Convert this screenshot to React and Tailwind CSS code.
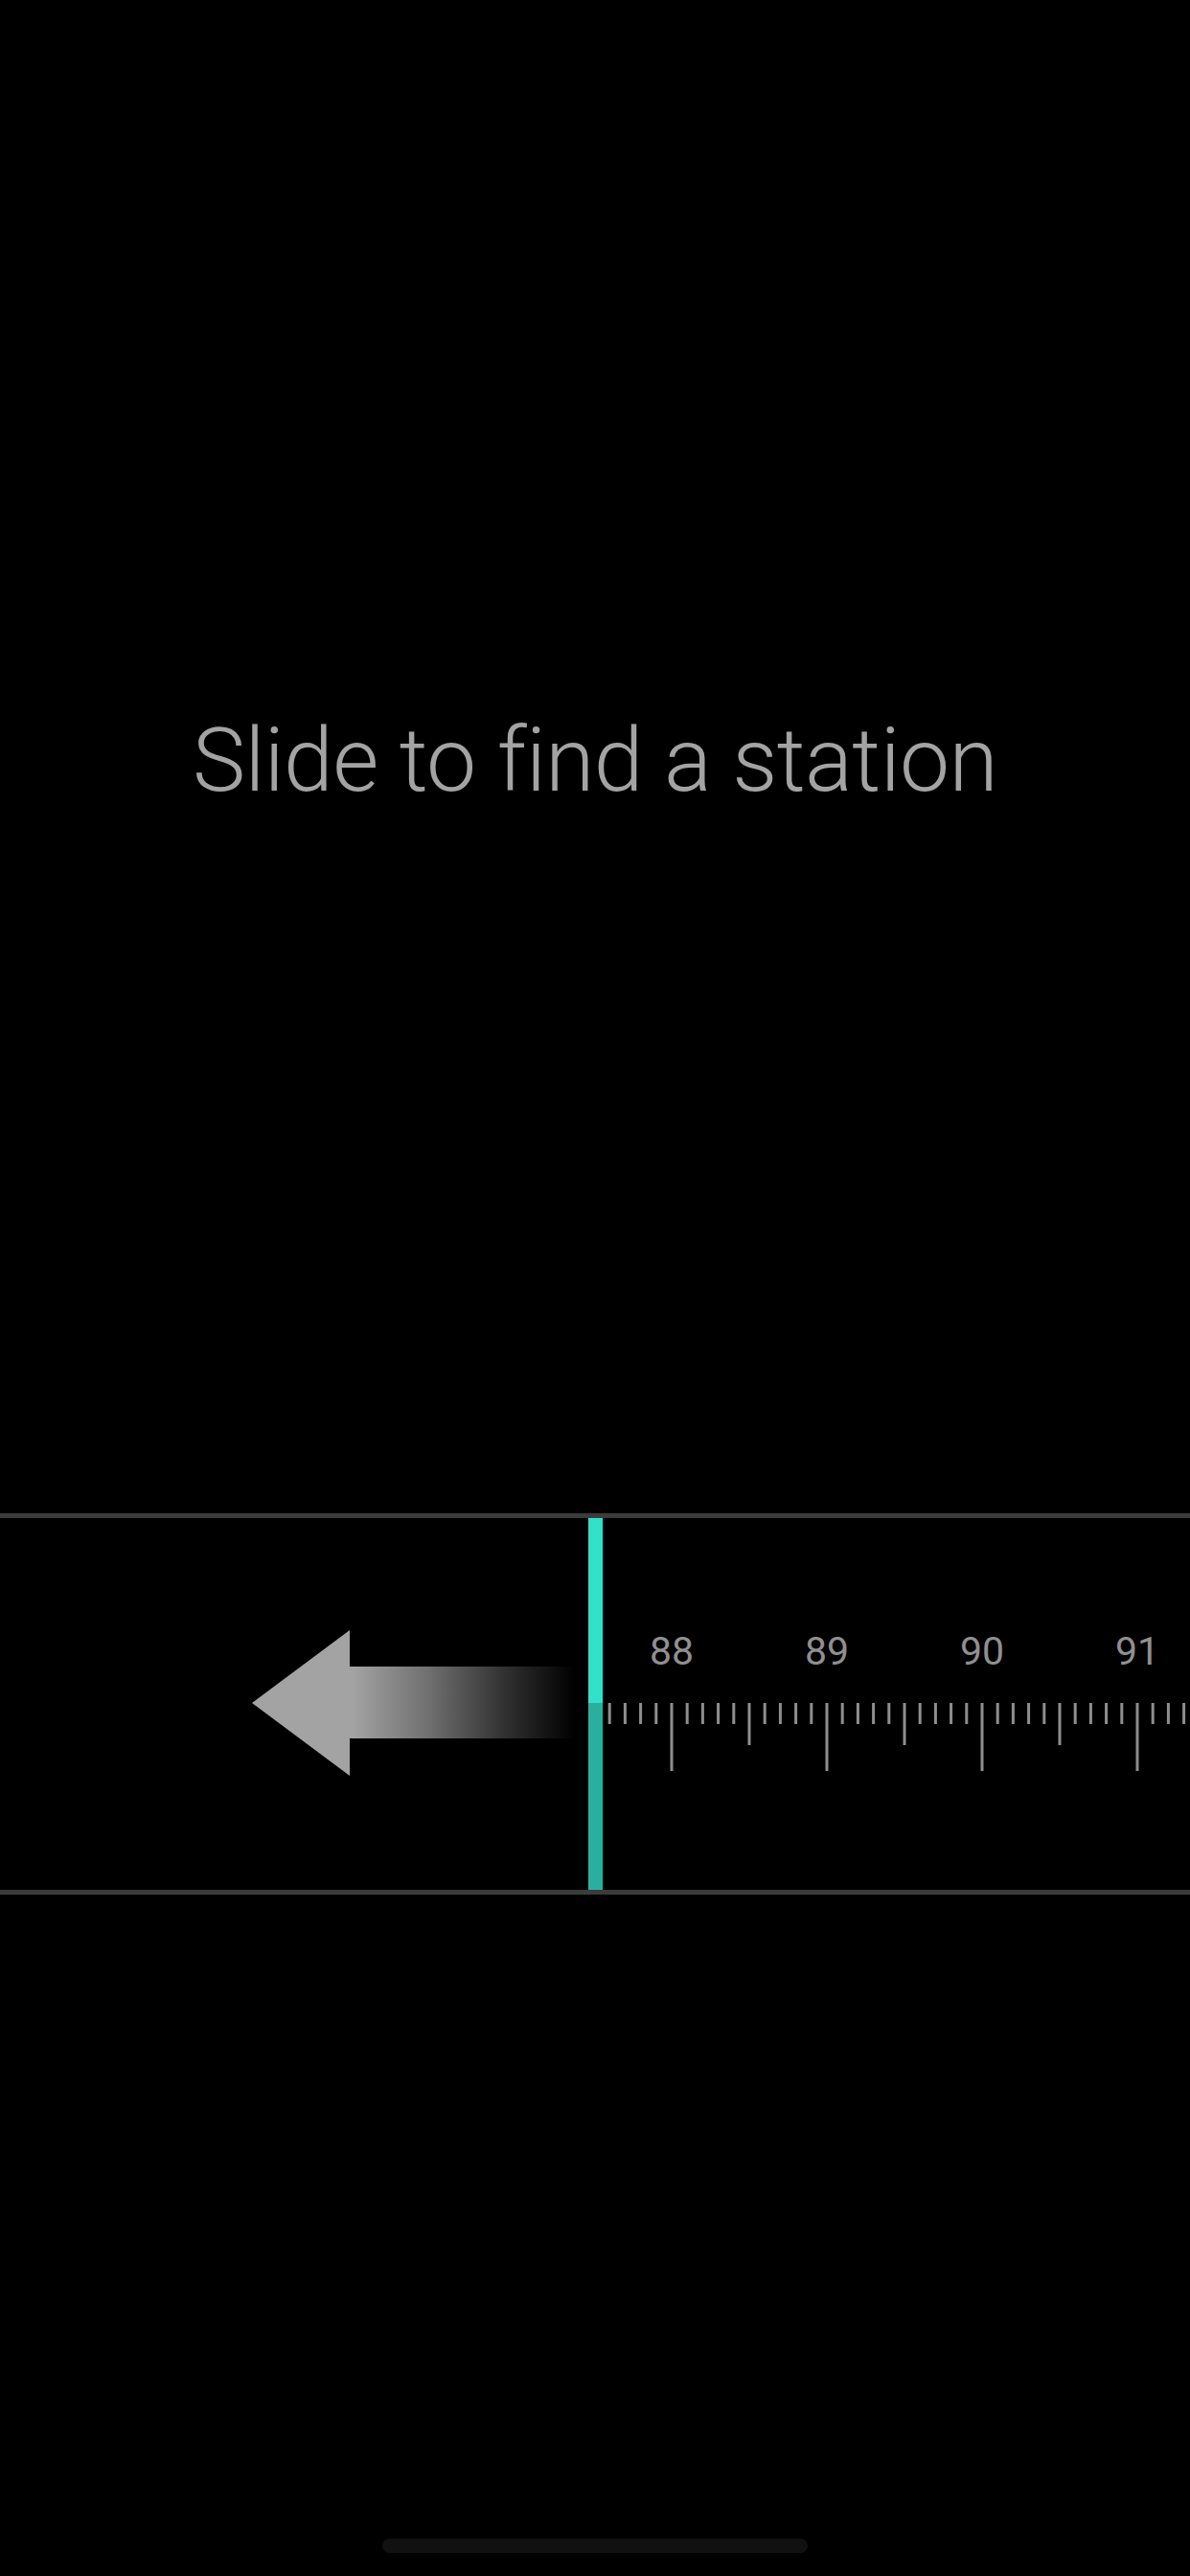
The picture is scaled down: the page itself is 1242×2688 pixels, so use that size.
import React from 'react';

// FM tuner onboarding screen
const TICK_START = 87.6;
const TICK_END = 91.6;
const UNIT = 162; // px per MHz
const ORIGIN = 72; // x of 88 inside the ruler

const ticks = [];
for (let i = Math.round(TICK_START * 10); i <= Math.round(TICK_END * 10); i++) {
  const x = ORIGIN + ((i - 880) / 10) * UNIT;
  const kind = i % 10 === 0 ? 'major' : i % 5 === 0 ? 'mid' : 'minor';
  ticks.push({ i, x, kind });
}

const Arrow = () => (
  <svg width="614" height="386" viewBox="0 0 614 386" className="block">
    <defs>
      <linearGradient id="fade" gradientUnits="userSpaceOnUse" x1="368" y1="0" x2="600" y2="0">
        <stop offset="0" stopColor="#a3a3a3" />
        <stop offset="0.35" stopColor="#6e6e6e" />
        <stop offset="0.7" stopColor="#2e2e2e" />
        <stop offset="1" stopColor="#000000" />
      </linearGradient>
    </defs>
    <polygon
      points="263,193 365,117 365,155 604,155 604,230 365,230 365,269"
      fill="url(#fade)"
    />
  </svg>
);

const Ruler = () => (
  <svg width="613" height="386" viewBox="0 0 613 386" className="block">
    {ticks.map((t) => {
      const bottom = t.kind === 'major' ? 264 : t.kind === 'mid' ? 237 : 215;
      return <rect key={t.i} x={t.x - 1.5} y={193} width={3} height={bottom - 193} fill="#8e8e8e" />;
    })}
    {[88, 89, 90, 91].map((n) => (
      <text
        key={n}
        x={ORIGIN + (n - 88) * UNIT}
        y={153}
        textAnchor="middle"
        fontSize="41"
        fill="#909090"
        fontFamily="Roboto, 'Liberation Sans', sans-serif"
        fontWeight="400"
      >
        {n}
      </text>
    ))}
  </svg>
);

export default function App() {
  return (
    <div className="w-[1242px] h-[2688px] bg-black flex flex-col font-['Roboto','Liberation_Sans',sans-serif]">
      <div className="h-[1579px] pt-[747px] flex justify-center">
        <p className="text-[93px] leading-none font-light tracking-[-0.6px] text-[#a3a3a3] whitespace-nowrap">
          Slide to find a station
        </p>
      </div>

      <div className="h-[398px] border-y-[5px] border-[#3b3b3b] flex">
        <Arrow />
        <div className="w-[15px] flex flex-col">
          <div className="h-[193px] bg-[#33e0c9]" />
          <div className="flex-1 bg-[#2aaf9f]" />
        </div>
        <div className="flex-1 overflow-hidden">
          <Ruler />
        </div>
      </div>

      <div className="flex-1 flex flex-col justify-end items-center pb-[24px]">
        <div className="w-[444px] h-[15px] rounded-full bg-[#111111]" />
      </div>
    </div>
  );
}
